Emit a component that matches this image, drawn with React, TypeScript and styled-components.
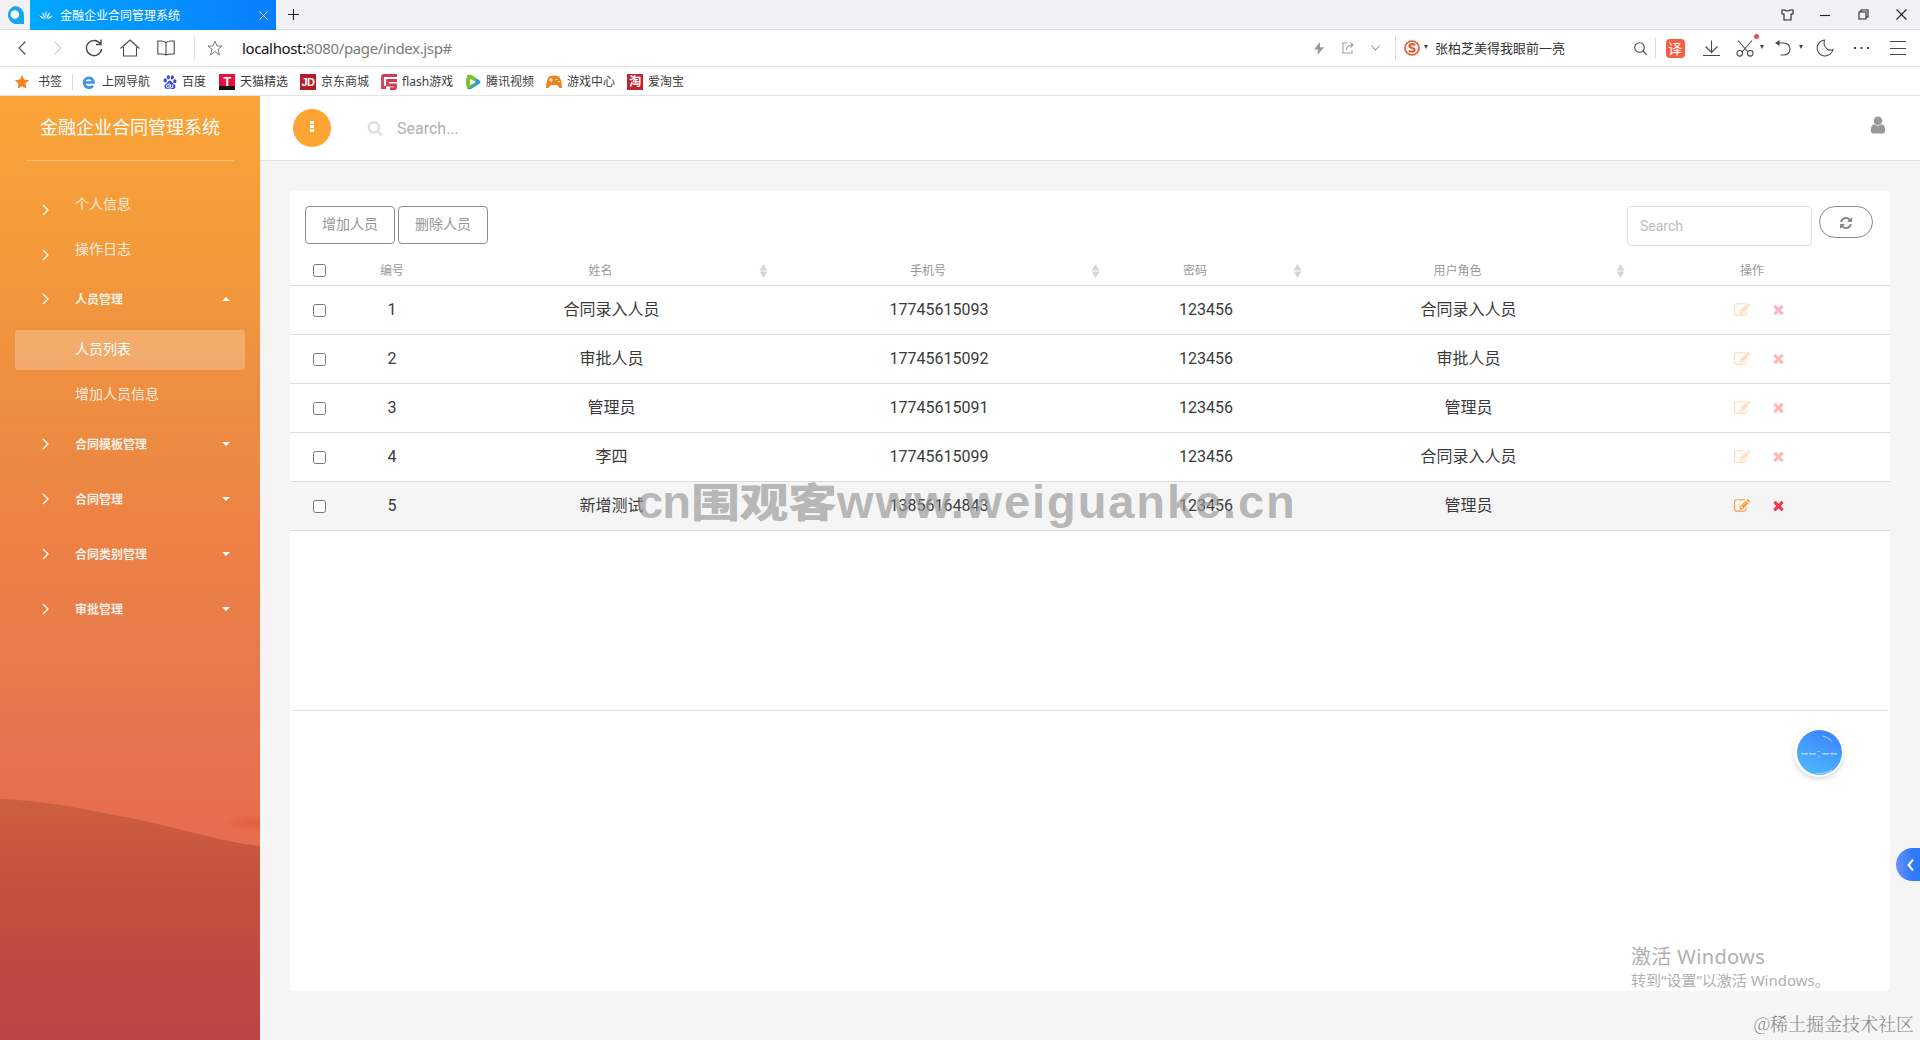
import React from "react";
import styled, { createGlobalStyle, css } from "styled-components";
import { SiBaidu } from "react-icons/si";

const CJK = `"Noto Sans CJK SC", sans-serif`;
const UI = `"Noto Sans", ${CJK}`;
const PAGE = `Roboto, ${CJK}`;

const Global = createGlobalStyle`
  *, *::before, *::after { box-sizing: border-box; }
  html, body { margin: 0; padding: 0; }
  body { font-family: ${PAGE}; color: #333; background: #f5f5f5; overflow: hidden; }
  svg { display: block; flex: none; }
`;

const Window = styled.div`
  position: relative;
  display: flex;
  flex-direction: column;
  width: 1920px;
  height: 1040px;
  overflow: hidden;
`;

/* ---------- browser chrome ---------- */
const TabStrip = styled.div`
  display: flex;
  align-items: stretch;
  height: 30px;
  background: #f2f2f4;
  border-bottom: 1px solid #dfdfe1;
`;
const Slot = styled.div<{ $w: number }>`
  display: flex;
  align-items: center;
  justify-content: center;
  flex: none;
  width: ${(p) => p.$w}px;
  height: 100%;
`;
const Tab = styled.div`
  display: flex;
  align-items: center;
  width: 246px;
  height: 30px;
  padding: 0 8px 0 9px;
  background: linear-gradient(90deg, #00a8fb, #0a7dfd);
  color: #fff;
`;
const TabTitle = styled.span`
  flex: 1;
  margin-left: 7px;
  font: 12px/16px ${CJK};
`;
const WindowButtons = styled.div`
  display: flex;
  margin-left: auto;
`;
const AddressBar = styled.div`
  display: flex;
  align-items: center;
  height: 37px;
  background: #fff;
  border-bottom: 1px solid #e2e2e2;
`;
const Rule = styled.span<{ $h?: number }>`
  flex: none;
  width: 1px;
  height: ${(p) => p.$h ?? 24}px;
  background: #dcdcdc;
`;
const Url = styled.div`
  margin-left: 14px;
  font: 15px/20px ${UI};
  color: #7b7b7b;
  letter-spacing: -0.36px;
  b { font-weight: 400; color: #111; }
`;
const AddressTools = styled.div`
  display: flex;
  align-items: center;
  height: 100%;
  margin-left: auto;
`;
const HotQuery = styled.span`
  width: 195px;
  padding-left: 4px;
  font: 13px/20px ${CJK};
  color: #333;
`;
const Translate = styled.span`
  display: flex;
  align-items: center;
  justify-content: center;
  width: 19px;
  height: 19px;
  border-radius: 4px;
  background: #f95d43;
  color: #fff;
  font: 14px/19px ${CJK};
`;
const SmallCaret = styled.i`
  width: 0;
  height: 0;
  border: 2.5px solid transparent;
  border-top: 4px solid #444;
  border-bottom: 0;
  margin-bottom: 2px;
`;
const Scissor = styled.div`
  position: relative;
  display: flex;
  &::after {
    content: "";
    position: absolute;
    top: -6px;
    right: -5px;
    width: 5px;
    height: 5px;
    border-radius: 50%;
    background: #dd5548;
  }
`;
const Bookmarks = styled.div`
  display: flex;
  align-items: center;
  gap: 12px;
  height: 29px;
  padding: 1px 0 0 14px;
  background: #fff;
  border-bottom: 1px solid #e2e2e2;
`;
const BookmarkRule = styled(Rule)`
  margin-right: -4px;
`;
const Bookmark = styled.div<{ $gap?: number; $w?: number }>`
  display: flex;
  align-items: center;
  gap: ${(p) => p.$gap ?? 5}px;
  width: ${(p) => (p.$w ? p.$w + "px" : "auto")};
  white-space: nowrap;
  font: 12px/16px "Noto Sans", ${CJK};
  color: #3c3c3c;
`;
const Tile = styled.span<{ $bg: string; $size?: number }>`
  display: flex;
  align-items: center;
  justify-content: center;
  width: 16px;
  height: 16px;
  background: ${(p) => p.$bg};
  color: #fff;
  font: 700 ${(p) => p.$size ?? 11}px/16px "Liberation Sans", ${CJK};
  letter-spacing: -0.5px;
`;

/* ---------- application ---------- */
const Shell = styled.div`
  display: flex;
  flex: 1;
  min-height: 0;
`;
const Sidebar = styled.aside`
  position: relative;
  width: 260px;
  flex: none;
  color: #fff;
  background: linear-gradient(
    180deg,
    #faa438 0,
    #f49a3b 150px,
    #ee8f40 290px,
    #ec8843 370px,
    #ee8144 440px,
    #ea7e48 500px,
    #e87c4a 560px,
    #e5734d 640px,
    #e66d4f 720px,
    #e66d4f 100%
  );
`;
const Dunes = styled.svg`
  position: absolute;
  left: 0;
  top: 0;
`;
const SideBody = styled.div`
  position: relative;
  display: flex;
  flex-direction: column;
`;
const Brand = styled.div`
  height: 65px;
  margin: 0 26px;
  text-align: center;
  font: 18px/60px ${CJK};
  border-bottom: 1px solid rgba(255, 255, 255, 0.3);
`;
const Menu = styled.nav`
  display: flex;
  flex-direction: column;
  gap: 5px;
  padding: 24px 15px 0;
`;
const Link = styled.a<{ $active?: boolean }>`
  display: flex;
  align-items: center;
  height: 40px;
  padding-left: 27px;
  border-radius: 3px;
  font: 14px/20px ${CJK};
  color: rgba(255, 255, 255, ${(p) => (p.$active ? 1 : 0.85)});
  background: ${(p) => (p.$active ? "rgba(255,255,255,.23)" : "transparent")};
  b { font-weight: 400; padding-bottom: 4px; }
  svg { margin-top: 9px; }
`;
const Group = styled.a<{ $open?: boolean }>`
  display: flex;
  align-items: center;
  height: 50px;
  padding: 0 15px 2px 27px;
  font: 700 12px/20px ${CJK};
  color: rgba(255, 255, 255, 0.88);
  &::after {
    content: "";
    margin-left: auto;
    border: 4px solid transparent;
    ${(p) =>
      p.$open
        ? css`border-bottom-color: #fff; border-top: 0;`
        : css`border-top-color: #fff; border-bottom: 0;`}
  }
`;
const IconCell = styled.span`
  width: 33px;
  flex: none;
`;
const Main = styled.main`
  display: flex;
  flex-direction: column;
  flex: 1;
  background: #f5f5f5;
`;
const TopBar = styled.header`
  display: flex;
  align-items: center;
  height: 65px;
  padding: 0 32px 0 33px;
  background: #fff;
  border-bottom: 1px solid #e0e0e0;
`;
const RoundButton = styled.button`
  display: flex;
  flex-direction: column;
  align-items: center;
  justify-content: center;
  gap: 1px;
  width: 38px;
  height: 38px;
  padding: 0 0 3px;
  border: 0;
  border-radius: 50%;
  background: #ffa534;
  i { width: 4px; height: 3px; background: #fff; }
`;
const TopSearch = styled.div`
  display: flex;
  align-items: center;
  flex: 1;
  gap: 14px;
  margin-left: 36px;
  font-size: 16px;
  color: #b0b0b0;
`;
const Account = styled.div`
  padding-bottom: 6px;
`;
const Card = styled.section`
  display: flex;
  flex-direction: column;
  width: 1600px;
  height: 800px;
  margin: 30px 0 0 30px;
  border-radius: 4px;
  background: #fff;
`;
const Toolbar = styled.div`
  display: flex;
  align-items: flex-start;
  gap: 3px;
  height: 65px;
  padding: 15px 17px 0 15px;
`;
const ActionButton = styled.button`
  width: 90px;
  height: 38px;
  padding: 0 0 5px;
  border: 1px solid #8c8c8c;
  border-radius: 4px;
  background: #fff;
  color: #969696;
  font: 14px/20px ${CJK};
`;
const Filter = styled.div`
  width: 185px;
  height: 40px;
  margin: 0 4px 0 auto;
  padding-left: 12px;
  border: 1px solid #ddd;
  border-radius: 4px;
  color: #bcbcbc;
  font: 14px/39px ${PAGE};
`;
const Refresh = styled.button`
  display: flex;
  align-items: center;
  justify-content: center;
  width: 54px;
  height: 32px;
  padding: 1px 0 0;
  border: 1px solid #8c8c8c;
  border-radius: 16px;
  background: #fff;
  color: #888;
`;
const row = css`
  display: grid;
  grid-template-columns: 44px 116px 323px 332px 202px 323px 260px;
  align-items: center;
`;
const HeadRow = styled.div`
  ${row}
  height: 30px;
  border-bottom: 1px solid #ddd;
`;
const HeadCell = styled.div<{ $pad?: number }>`
  display: flex;
  align-items: center;
  gap: 8px;
  height: 100%;
  font: 12px/20px ${CJK};
  color: #989898;
  padding-right: ${(p) => p.$pad ?? 0}px;
  span {
    flex: 1;
    padding-bottom: 1px;
    text-align: center;
  }
`;
const Row = styled.div<{ $hover?: boolean }>`
  ${row}
  height: 49px;
  border-bottom: 1px solid #ddd;
  background: ${(p) => (p.$hover ? "#f5f5f5" : "#fff")};
`;
const Cell = styled.div`
  text-align: center;
  font: 16px/24px ${PAGE};
  color: #3a3a3a;
`;
const CheckCell = styled.div`
  display: flex;
  padding-left: 23px;
`;
const Check = styled.input`
  width: 13px;
  height: 13px;
  margin: 0;
`;
const Ops = styled.div<{ $faded: boolean }>`
  display: flex;
  align-items: center;
  justify-content: center;
  gap: 21px;
  padding-bottom: 1px;
  opacity: ${(p) => (p.$faded ? 0.36 : 1)};
`;
const TableEnd = styled.div`
  height: 180px;
  margin: 0 2px;
  border-bottom: 1px solid #e4e4e4;
`;

/* ---------- floating pieces above the page ---------- */
const Stamp = styled.div`
  position: absolute;
  left: 637px;
  top: 472px;
  display: flex;
  align-items: center;
  height: 60px;
  white-space: nowrap;
  color: rgba(152, 152, 152, 0.68);
`;
const StampLatin = styled.span<{ $w: number; $ls: number }>`
  width: ${(p) => p.$w}px;
  font: 700 47px/60px "Liberation Sans", sans-serif;
  letter-spacing: ${(p) => p.$ls}px;
`;
const StampHan = styled.span`
  width: 146px;
  font: 900 49px/60px ${CJK};
  letter-spacing: -0.5px;
  transform: translateY(-2px) scaleY(0.82);
`;
const Ball = styled.div`
  position: absolute;
  left: 1794px;
  top: 727px;
  display: flex;
  align-items: center;
  justify-content: center;
  width: 50px;
  height: 50px;
  border-radius: 50%;
  background: #fff;
  box-shadow: 0 2px 5px rgba(0, 0, 0, 0.16);
`;
const Drawer = styled.div`
  position: absolute;
  right: 0;
  top: 848px;
  display: flex;
  align-items: center;
  justify-content: center;
  width: 24px;
  height: 33px;
  padding-left: 4px;
  border-radius: 17px 0 0 17px;
  background: linear-gradient(90deg, #6a92fb, #2f7af9 70%);
`;
const Activate = styled.div`
  position: absolute;
  left: 1631px;
  top: 943px;
  color: #b0b0b0;
  white-space: nowrap;
  font: 15px/20px ${UI};
`;
const ActivateTitle = styled.div`
  font-size: 20px;
  line-height: 27px;
  letter-spacing: 0.35px;
`;
const Credit = styled.div`
  position: absolute;
  right: 6px;
  top: 1010px;
  white-space: nowrap;
  font: 300 18px/26px "Noto Serif CJK SC", "Liberation Serif", ${CJK};
  color: #858585;
`;

type FaProps = { d: string; size: number; color?: string };
const Fa = ({ d, size, color = "currentColor" }: FaProps) => (
  <svg width={size} height={size} viewBox="0 0 1792 1792" fill={color}>
    <path d={d} />
  </svg>
);
const EDIT =
  "M888 1184l116-116-152-152-116 116v56h96v96h56zm440-720q-16-16-33 1l-350 350q-17 17-1 33t33-1l350-350q17-17 1-33zm80 594v190q0 119-84.5 203.5t-203.5 84.5h-832q-119 0-203.5-84.5t-84.5-203.5v-832q0-119 84.5-203.5t203.5-84.5h832q63 0 117 25 15 7 18 23 3 17-9 29l-49 49q-14 14-32 8-23-6-45-6h-832q-66 0-113 47t-47 113v832q0 66 47 113t113 47h832q66 0 113-47t47-113v-126q0-13 9-22l64-64q15-15 35-7t20 29zm-96-738l288 288-672 672h-288v-288zm444 132l-92 92-288-288 92-92q28-28 68-28t68 28l152 152q28 28 28 68t-28 68z";
const TIMES =
  "M1490 1322q0 40-28 68l-136 136q-28 28-68 28t-68-28l-294-294-294 294q-28 28-68 28t-68-28l-136-136q-28-28-28-68t28-68l294-294-294-294q-28-28-28-68t28-68l136-136q28-28 68-28t68 28l294 294 294-294q28-28 68-28t68 28l136 136q28 28 28 68t-28 68l-294 294 294 294q28 28 28 68z";
const REFRESH =
  "M1639 1056q0 5-1 7-64 268-268 434.5t-478 166.5q-146 0-282.5-55t-243.5-157l-129 129q-19 19-45 19t-45-19-19-45v-448q0-26 19-45t45-19h448q26 0 45 19t19 45-19 45l-137 137q71 66 161 102t187 36q134 0 250-65t186-179q11-17 53-117 8-23 30-23h192q13 0 22.5 9.5t9.5 22.5zm25-800v448q0 26-19 45t-45 19h-448q-26 0-45-19t-19-45 19-45l138-138q-148-137-349-137-134 0-250 65t-186 179q-11 17-53 117-8 23-30 23h-199q-13 0-22.5-9.5t-9.5-22.5v-7q65-268 270-434.5t480-166.5q146 0 284 55.5t245 156.5l130-129q19-19 45-19t45 19 19 45z";
const SEARCH =
  "M1216 832q0-185-131.5-316.5t-316.5-131.5-316.5 131.5-131.5 316.5 131.5 316.5 316.5 131.5 316.5-131.5 131.5-316.5zm512 832q0 52-38 90t-90 38q-54 0-90-38l-343-342q-179 124-399 124-143 0-273.5-55.5t-225-150-150-225-55.5-273.5 55.5-273.5 150-225 225-150 273.5-55.5 273.5 55.5 225 150 150 225 55.5 273.5q0 220-124 399l343 343q37 37 37 90z";
const USER =
  "M1536 1399q0 109-62.5 187t-150.5 78h-854q-88 0-150.5-78t-62.5-187q0-85 8.5-160.5t31.5-152 58.5-131 94-89 134.5-34.5q131 128 313 128t313-128q76 0 134.5 34.5t94 89 58.5 131 31.5 152 8.5 160.5zm-256-887q0 159-112.5 271.5t-271.5 112.5-271.5-112.5-112.5-271.5 112.5-271.5 271.5-112.5 271.5 112.5 112.5 271.5z";

type LineProps = { w: number; h?: number; color?: string; sw?: number; children: React.ReactNode };
const Line = ({ w, h = w, color = "#4a4a4a", sw = 1.1, children }: LineProps) => (
  <svg width={w} height={h} viewBox={`0 0 ${w} ${h}`} fill="none" stroke={color} strokeWidth={sw}>
    {children}
  </svg>
);

const Chevron = () => (
  <IconCell>
    <Line w={8} h={12} color="#fff" sw={1.3}><path d="M1 1l5 5-5 5" /></Line>
  </IconCell>
);
const SortIcon = () => (
  <svg width="14" height="14" viewBox="0 0 14 14" fill="#d6d6d6">
    <path d="M4.500 0L8.500 6.500H.5zM4.500 14L8.500 7.500H.5z" />
  </svg>
);

const people = [
  ["1", "合同录入人员", "17745615093", "123456", "合同录入人员"],
  ["2", "审批人员", "17745615092", "123456", "审批人员"],
  ["3", "管理员", "17745615091", "123456", "管理员"],
  ["4", "李四", "17745615099", "123456", "合同录入人员"],
  ["5", "新增测试", "13856164843", "123456", "管理员"],
];

const Chrome = () => (
  <>
    <TabStrip>
      <Slot $w={30}>
        <svg width="18" height="18" viewBox="0 0 18 18">
          <path d="M9 0a9 9 0 019 9v9h-4.500A9 9 0 119 0z" fill="#18a5ec" />
          <circle cx="8.800" cy="8.500" r="4.300" fill="#fff" />
        </svg>
      </Slot>
      <Tab>
        <svg width="14" height="10" viewBox="0 0 14 10" fill="#fff" opacity=".9">
          <path d="M7 9Q5.500 4 7 0 8.500 4 7 9zM6.500 9Q3.500 6 3 2 6 4 6.500 9zM7.500 9Q10.500 6 11 2 8 4 7.500 9zM6 9.500Q2.500 9 0 5.500 4 6 6 9.500zM8 9.500Q11.500 9 14 5.500 10 6 8 9.500z" />
        </svg>
        <TabTitle>金融企业合同管理系统</TabTitle>
        <Line w={9} color="#fff" sw={1}><path d="M.5.5l8 8M8.500.5l-8 8" /></Line>
      </Tab>
      <Slot $w={35}><Line w={11} color="#222"><path d="M5.500 0v11M0 5.500h11" /></Line></Slot>
      <WindowButtons>
        <Slot $w={38}>
          <Line w={13} h={12} color="#222"><path d="M1 1h3q2.500 2 5 0h3v4h-2v6H3V5H1z" /></Line>
        </Slot>
        <Slot $w={38}><Line w={10} color="#222"><path d="M0 5.500h10" /></Line></Slot>
        <Slot $w={38}>
          <Line w={11} color="#222" sw={1.1}><path d="M1 3h7v7H1zM3 3V1h7v7H8" /></Line>
        </Slot>
        <Slot $w={38}><Line w={11} color="#222" sw={1.1}><path d="M.5.5l10 10M10.500.5l-10 10" /></Line></Slot>
      </WindowButtons>
    </TabStrip>

    <AddressBar>
      <Slot $w={44}><Line w={8} h={14}><path d="M7.500.5L1 7l6.500 6.500" /></Line></Slot>
      <Slot $w={28}><Line w={8} h={14} color="#ccc"><path d="M.5.5L7 7 .5 13.500" /></Line></Slot>
      <Slot $w={44}>
        <Line w={18} h={18} sw={1.4}><path d="M15.500 5A7.600 7.600 0 1016.600 10M16 .5V5.500H11" /></Line>
      </Slot>
      <Slot $w={28}>
        <Line w={20} h={18}><path d="M.5 9.500L10 1l9.500 8.500M3.500 8v9h13V8" /></Line>
      </Slot>
      <Slot $w={44}>
        <Line w={18} h={16}><path d="M9 2.500Q7 1 4 1H.8v13H4q3 0 5 1 2-1 5-1h3.200V1H14q-3 0-5 1.500V15" /></Line>
      </Slot>
      <Slot $w={12}><Rule /></Slot>
      <Slot $w={30}>
        <Line w={16} color="#777" sw={1}>
          <path d="M8 1l2 5h5l-4 3.300L12.500 15 8 11.500 3.500 15 5 9.300 1 6h5z" />
        </Line>
      </Slot>
      <Url style={{ marginLeft: 12 }}><b>localhost:</b>8080/page/index.jsp#</Url>

      <AddressTools>
        <Slot $w={28}>
          <svg width="10" height="13" viewBox="0 0 10 13" fill="#999"><path d="M6 0L0 7.500h4L3.500 13 10 5.300H6z" /></svg>
        </Slot>
        <Slot $w={29}>
          <Line w={12} color="#a0a0a0"><path d="M5 1H1v10h9V8M4.500 8Q4.500 3 11 3M8.500.5L11 3 8.500 5.500" /></Line>
        </Slot>
        <Slot $w={26}><Line w={9} h={6} color="#999"><path d="M.5.5l4 4.500 4-4.500" /></Line></Slot>
        <Slot $w={15}><Rule /></Slot>
        <Slot $w={17}>
          <svg width="16" height="16" viewBox="0 0 16 16">
            <circle cx="8" cy="8" r="7" fill="none" stroke="#e6562c" strokeWidth="1.600" />
            <path d="M11.300 5Q8 3.300 5.800 4.700 4.500 7 8 8t2.300 2.900Q8 12.500 4.700 11" fill="none" stroke="#e6562c" strokeWidth="2.200" />
          </svg>
        </Slot>
        <Slot $w={11}><SmallCaret /></Slot>
        <HotQuery>张柏芝美得我眼前一亮</HotQuery>
        <Slot $w={28}>
          <Line w={13}><circle cx="5.500" cy="5.500" r="4.800" /><path d="M9 9l3.500 3.500" /></Line>
        </Slot>
        <Slot $w={3}><Rule $h={22} /></Slot>
        <Slot $w={36}><Translate>译</Translate></Slot>
        <Slot $w={37}>
          <Line w={17} h={16}><path d="M8.500 .5v12M2.500 6.500l6 6 6-6M0 15.500h17" /></Line>
        </Slot>
        <Slot $w={29}>
          <Scissor>
            <Line w={18} h={17}>
              <path d="M2 .5l10 11.500M16 .5L6 12" />
              <circle cx="3.800" cy="13.300" r="2.800" /><circle cx="14.200" cy="13.300" r="2.800" />
            </Line>
          </Scissor>
        </Slot>
        <Slot $w={6}><SmallCaret /></Slot>
        <Slot $w={36}>
          <Line w={16} h={16}>
            <path d="M2 3h7a6 6 0 010 12H5.500" />
            <path d="M4.500 0v6L0 3z" fill="#4a4a4a" stroke="none" />
          </Line>
        </Slot>
        <Slot $w={0}><SmallCaret /></Slot>
        <Slot $w={47}>
          <Line w={18} h={18}><path d="M8.500 1A8 8 0 1017 10.500Q14 12 11 10 7 6.500 8.500 1z" /></Line>
        </Slot>
        <Slot $w={27}>
          <svg width="15" height="3" viewBox="0 0 15 3" fill="#444"><path d="M0 0h2v2H0zM6.500 0h2v2h-2zM13 0h2v2h-2z" /></svg>
        </Slot>
        <Slot $w={45}><Line w={16} h={14} sw={1}><path d="M0 .5h16M0 7.500h16M0 13.500h16" /></Line></Slot>
      </AddressTools>
    </AddressBar>

    <Bookmarks>
      <Bookmark $gap={8} $w={46}>
        <svg width="16" height="16" viewBox="0 0 16 16" fill="#f9801d">
          <path d="M8 1l2.200 4.600 5 .6-3.700 3.400 1 5L8 12.200 3.500 14.600l1-5L.8 6.200l5-.6z" />
        </svg>
        书签
      </Bookmark>
      <BookmarkRule $h={16} />
      <Bookmark $w={70}>
        <svg width="16" height="16" viewBox="0 0 16 16" fill="none" stroke="#3b93e6" strokeWidth="2.700">
          <path d="M3 8.500h9.500A4.700 4.700 0 103.500 10.500a5 5 0 008.500 1.300" />
        </svg>
        上网导航
      </Bookmark>
      <Bookmark $w={44}><SiBaidu size={14} color="#3b4bd8" />百度</Bookmark>
      <Bookmark><Tile $bg="linear-gradient(#e8103c 12px, #111 12px)" $size={13}>T</Tile>天猫精选</Bookmark>
      <Bookmark><Tile $bg="#b81c28">JD</Tile>京东商城</Bookmark>
      <Bookmark $w={72}>
        <svg width="16" height="16" viewBox="0 0 16 16" fill="none" stroke="#d23c50" strokeWidth="2.800">
          <path d="M16 1.500H3Q1.500 1.500 1.500 3v10.500H5M16 6.500H6.500v4.500h8V14q0 .6-.8.6H9" />
        </svg>
        flash游戏
      </Bookmark>
      <Bookmark>
        <svg width="16" height="16" viewBox="0 0 16 16">
          <path d="M2 2Q3 0 6 1l8 5q3 2 0 4l-8 5q-3 1-4-1-1-6 0-12z" fill="#2a9fe0" />
          <path d="M2 2Q3 0 6 1l5 3-1 6-7 5q-3-4-1-13z" fill="#7ac32b" />
          <path d="M5 5l6 3-6 3z" fill="#fff" />
        </svg>
        腾讯视频
      </Bookmark>
      <Bookmark>
        <svg width="16" height="14" viewBox="0 0 16 14">
          <path d="M3 1.500Q8-.5 13 1.500 15.500 4 16 13h-2.500Q12 10 10.500 10h-5Q4 10 2.500 13H0Q.5 4 3 1.500z" fill="#f0811f" />
          <path d="M5 3v4M3 5h4M9.500 4.500h2M12 6.500h2" stroke="#fff" strokeWidth="1.100" fill="none" />
        </svg>
        游戏中心
      </Bookmark>
      <Bookmark><Tile $bg="#c5232f" $size={12}>淘</Tile>爱淘宝</Bookmark>
    </Bookmarks>
  </>
);

const App = () => (
  <Window>
    <Global />
    <Chrome />
    <Shell>
      <Sidebar>
        <Dunes width="260" height="944" viewBox="0 0 260 944">
          <defs>
            <linearGradient id="dune" x1="0" y1="0" x2="0" y2="1">
              <stop offset="0" stopColor="#cd5f40" />
              <stop offset=".3" stopColor="#c5543f" />
              <stop offset=".65" stopColor="#bf4a41" />
              <stop offset="1" stopColor="#bb4546" />
            </linearGradient>
            <radialGradient id="edge">
              <stop offset="0" stopColor="#dc5a3c" stopOpacity=".75" />
              <stop offset="1" stopColor="#dc5a3c" stopOpacity="0" />
            </radialGradient>
          </defs>
          <ellipse cx="256" cy="727" rx="32" ry="9" fill="url(#edge)" />
          <path d="M0 703Q30 704 60 709T145 725L215 742Q240 748 260 750V944H0z" fill="url(#dune)" />
        </Dunes>
        <SideBody>
          <Brand>金融企业合同管理系统</Brand>
          <Menu>
            <Link><Chevron /><b>个人信息</b></Link>
            <Link><Chevron /><b>操作日志</b></Link>
            <Group $open><Chevron />人员管理</Group>
            <Link $active><IconCell /><b>人员列表</b></Link>
            <Link><IconCell /><b>增加人员信息</b></Link>
            <Group><Chevron />合同模板管理</Group>
            <Group><Chevron />合同管理</Group>
            <Group><Chevron />合同类别管理</Group>
            <Group><Chevron />审批管理</Group>
          </Menu>
        </SideBody>
      </Sidebar>

      <Main>
        <TopBar>
          <RoundButton><i /><i /><i /></RoundButton>
          <TopSearch><Fa d={SEARCH} size={16} color="#ddd" />Search...</TopSearch>
          <Account><Fa d={USER} size={20} color="#999" /></Account>
        </TopBar>
        <Card>
          <Toolbar>
            <ActionButton>增加人员</ActionButton>
            <ActionButton>删除人员</ActionButton>
            <Filter>Search</Filter>
            <Refresh><Fa d={REFRESH} size={14} /></Refresh>
          </Toolbar>
          <HeadRow>
            <CheckCell><Check type="checkbox" /></CheckCell>
            <HeadCell><span>编号</span></HeadCell>
            {["姓名", "手机号", "密码", "用户角色"].map((t) => (
              <HeadCell key={t}><span>{t}</span><SortIcon /></HeadCell>
            ))}
            <HeadCell $pad={16}><span>操作</span></HeadCell>
          </HeadRow>
          {people.map((p, i) => (
            <Row key={p[0]} $hover={i === 4}>
              <CheckCell><Check type="checkbox" /></CheckCell>
              {p.map((v, j) => <Cell key={j}>{v}</Cell>)}
              <Ops $faded={i !== 4}>
                <Fa d={EDIT} size={16} color="#fb9a3c" />
                <Fa d={TIMES} size={15} color="#f8374c" />
              </Ops>
            </Row>
          ))}
          <TableEnd />
        </Card>
      </Main>
    </Shell>

    <Stamp>
      <StampLatin $w={54} $ls={-1}>cn</StampLatin>
      <StampHan>围观客</StampHan>
      <StampLatin $w={460} $ls={1.9}>www.weiguanke.cn</StampLatin>
    </Stamp>
    <Ball>
      <svg width="45" height="45" viewBox="0 0 45 45">
        <defs>
          <linearGradient id="ball" x1=".7" y1="0" x2=".3" y2="1">
            <stop offset="0" stopColor="#3a84fa" />
            <stop offset="1" stopColor="#4fb8fc" />
          </linearGradient>
        </defs>
        <circle cx="22.500" cy="22.500" r="22.500" fill="url(#ball)" />
        <g stroke="#b5e2fe" strokeWidth="1.200" fill="none">
          <path d="M4 23.800h16M25 23.800h16" strokeDasharray="7 1" />
          <path d="M21 21.500h1.500M21 27h1.500" />
          <path d="M26 6l5 2 4 3.500" strokeDasharray="4 1" opacity=".8" />
          <path d="M19 43.500Q30 44 35 40" opacity=".7" />
        </g>
      </svg>
    </Ball>
    <Drawer><Line w={7} h={12} color="#fff" sw={2}><path d="M6 .5L1.500 6 6 11.500" /></Line></Drawer>
    <Activate>
      <ActivateTitle>激活 Windows</ActivateTitle>
      转到“设置”以激活 Windows。
    </Activate>
    <Credit>@稀土掘金技术社区</Credit>
  </Window>
);

export default App;
